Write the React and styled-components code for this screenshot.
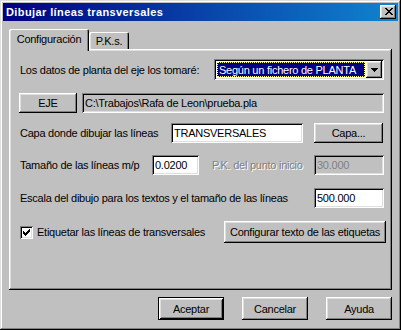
import React from "react";
import styled, { createGlobalStyle, css } from "styled-components";

const GlobalStyle = createGlobalStyle`
  html, body { margin: 0; padding: 0; background: #c0c0c0; }
  body { font-family: "Liberation Sans", Arial, sans-serif; font-size: 11px; color: #000; }
  * { box-sizing: border-box; }
`;

const raised = css`
  box-shadow: inset -1px -1px #000, inset 1px 1px #fff, inset -2px -2px #808080, inset 2px 2px #dfdfdf;
`;
const sunken = css`
  box-shadow: inset 1px 1px #808080, inset -1px -1px #fff, inset 2px 2px #000, inset -2px -2px #dfdfdf;
`;

const Window = styled.div`
  width: 401px;
  height: 330px;
  padding: 3px;
  background: #c0c0c0;
  box-shadow: inset -1px -1px #000, inset 1px 1px #dfdfdf, inset -2px -2px #808080, inset 2px 2px #fff;
  display: flex;
  flex-direction: column;
  font-family: "Liberation Sans", Arial, sans-serif;
  font-size: 11px;
  letter-spacing: -0.25px;
`;

const TitleBar = styled.div`
  height: 18px;
  display: flex;
  align-items: center;
  padding: 0 2px 0 3px;
  background: linear-gradient(to right, #000080, #1084d0);
`;

const Title = styled.span`
  flex: 1;
  color: #fff;
  font-weight: bold;
  font-size: 11px;
  letter-spacing: 0.4px;
`;

const CloseButton = styled.div`
  width: 16px;
  height: 14px;
  background: #c0c0c0;
  ${raised};
  display: flex;
  align-items: center;
  justify-content: center;
  padding: 0 0 1px 1px;
`;

const Body = styled.div`
  flex: 1;
  display: flex;
  flex-direction: column;
  padding: 8px 6px 0 6px;
`;

const Tabs = styled.div`
  height: 20px;
  display: flex;
  align-items: flex-end;
`;

const Tab = styled.div`
  position: relative;
  z-index: ${(p) => (p.$active ? 2 : 1)};
  width: ${(p) => p.$width}px;
  height: ${(p) => (p.$active ? 22 : 17)}px;
  margin-bottom: ${(p) => (p.$active ? -2 : 0)}px;
  padding-bottom: ${(p) => (p.$active ? 2 : 0)}px;
  background: #c0c0c0;
  border-radius: 2px 2px 0 0;
  box-shadow: inset 1px 1px #fff, inset 2px 0 #dfdfdf, inset -1px 0 #000, inset -2px 0 #808080;
  display: flex;
  align-items: center;
  justify-content: center;
`;

const Panel = styled.div`
  height: 241px;
  background: #c0c0c0;
  box-shadow: inset -1px -1px #000, inset 1px 1px #fff, inset -2px -2px #808080, inset 2px 2px #dfdfdf;
  padding: 10px 8px 0 11px;
  display: flex;
  flex-direction: column;
`;

const Row = styled.div`
  display: flex;
  align-items: center;
  height: ${(p) => p.$h || 20}px;
  margin-top: ${(p) => p.$mt || 0}px;
`;

const Label = styled.span`
  white-space: nowrap;
  ${(p) => p.$width && `width: ${p.$width}px; flex: none;`}
  ${(p) => p.$ml && `margin-left: ${p.$ml}px;`}
  ${(p) =>
    p.$disabled &&
    css`
      color: #808080;
      text-shadow: 1px 1px #fff;
    `}
`;

const Field = styled.div`
  height: 20px;
  ${(p) => (p.$width ? `width: ${p.$width}px; flex: none;` : "flex: 1;")}
  margin-left: ${(p) => (p.$auto ? "auto" : `${p.$ml || 0}px`)};
  background: ${(p) => (p.$gray ? "#c0c0c0" : "#fff")};
  color: ${(p) => (p.$dim ? "#808080" : "#000")};
  ${sunken};
  padding: 0 3px;
  display: flex;
  align-items: center;
  white-space: nowrap;
  overflow: hidden;
`;

const Button = styled.div`
  height: ${(p) => p.$h || 20}px;
  width: ${(p) => p.$width}px;
  flex: none;
  margin-left: ${(p) => (p.$auto ? "auto" : `${p.$ml || 0}px`)};
  margin-right: ${(p) => p.$mr || 0}px;
  background: #c0c0c0;
  display: flex;
  align-items: center;
  justify-content: center;
  white-space: nowrap;
  ${(p) =>
    p.$default
      ? css`
          box-shadow: inset 1px 1px #000, inset -1px -1px #000, inset 2px 2px #fff, inset -2px -2px #000,
            inset 3px 3px #dfdfdf, inset -3px -3px #808080;
        `
      : raised}
`;

const Select = styled.div`
  width: 170px;
  height: 21px;
  margin-left: auto;
  background: #fff;
  ${sunken};
  padding: 2px;
  display: flex;
`;

const SelectValue = styled.div`
  flex: 1;
  margin: 1px;
  background: #000080;
  color: #fff;
  outline: 1px dotted #ffff80;
  outline-offset: -1px;
  padding: 0 2px;
  display: flex;
  align-items: center;
  white-space: nowrap;
  overflow: hidden;
`;

const SelectArrow = styled.div`
  width: 16px;
  background: #c0c0c0;
  ${raised};
  display: flex;
  align-items: center;
  justify-content: center;
`;

const CheckBox = styled.div`
  width: 13px;
  height: 13px;
  flex: none;
  background: #fff;
  ${sunken};
  display: flex;
  align-items: center;
  justify-content: center;
  margin-right: 4px;
`;

const Footer = styled.div`
  display: flex;
  justify-content: flex-end;
  gap: 18px;
  padding-top: 7px;
`;

const CloseIcon = () => (
  <svg width="8" height="7" viewBox="0 0 8 7" shapeRendering="crispEdges">
    <path
      d="M0 0h2v1H0zM6 0h2v1H6zM1 1h2v1H1zM5 1h2v1H5zM2 2h4v1H2zM3 3h2v1H3zM2 4h4v1H2zM1 5h2v1H1zM5 5h2v1H5zM0 6h2v1H0zM6 6h2v1H6z"
      fill="#000"
    />
  </svg>
);

const ArrowIcon = () => (
  <svg width="7" height="4" viewBox="0 0 7 4" shapeRendering="crispEdges">
    <path d="M0 0h7v1H0zM1 1h5v1H1zM2 2h3v1H2zM3 3h1v1H3z" fill="#000" />
  </svg>
);

const CheckIcon = () => (
  <svg width="7" height="7" viewBox="0 0 7 7" shapeRendering="crispEdges">
    <path
      d="M6 0h1v1H6zM5 1h2v1H5zM0 2h1v1H0zM4 2h3v1H4zM0 3h2v1H0zM3 3h3v1H3zM0 4h5v1H0zM1 5h3v1H1zM2 6h1v1H2z"
      fill="#000"
    />
  </svg>
);

export default function App() {
  return (
    <>
      <GlobalStyle />
      <Window>
        <TitleBar>
          <Title>Dibujar líneas transversales</Title>
          <CloseButton>
            <CloseIcon />
          </CloseButton>
        </TitleBar>
        <Body>
          <Tabs>
            <Tab $active $width={80}>Configuración</Tab>
            <Tab $width={40}>P.K.s.</Tab>
          </Tabs>
          <Panel>
            <Row $h={21}>
              <Label>Los datos de planta del eje los tomaré:</Label>
              <Select>
                <SelectValue>Según un fichero de PLANTA</SelectValue>
                <SelectArrow>
                  <ArrowIcon />
                </SelectArrow>
              </Select>
            </Row>
            <Row $mt={13}>
              <Button $width={58} $ml={-1}>EJE</Button>
              <Field $gray $ml={5}>C:\Trabajos\Rafa de Leon\prueba.pla</Field>
            </Row>
            <Row $mt={10}>
              <Label>Capa donde dibujar las líneas</Label>
              <Field $width={132} $auto>TRANSVERSALES</Field>
              <Button $width={69} $ml={11} $mr={1}>Capa...</Button>
            </Row>
            <Row $mt={12}>
              <Label $width={132}>Tamaño de las líneas m/p</Label>
              <Field $width={47}>0.0200</Field>
              <Label $disabled $ml={13}>P.K. del punto inicio</Label>
              <Field $width={70} $auto $gray $dim>30.000</Field>
            </Row>
            <Row $mt={13}>
              <Label>Escala del dibujo para los textos y el tamaño de las líneas</Label>
              <Field $width={70} $auto>500.000</Field>
            </Row>
            <Row $mt={13} $h={22}>
              <CheckBox>
                <CheckIcon />
              </CheckBox>
              <Label>Etiquetar las líneas de transversales</Label>
              <Button $width={162} $h={22} $auto $mr={-2}>Configurar texto de las etiquetas</Button>
            </Row>
          </Panel>
          <Footer>
            <Button $default $width={66} $h={23}>Aceptar</Button>
            <Button $width={66} $h={23}>Cancelar</Button>
            <Button $width={66} $h={23}>Ayuda</Button>
          </Footer>
        </Body>
      </Window>
    </>
  );
}
